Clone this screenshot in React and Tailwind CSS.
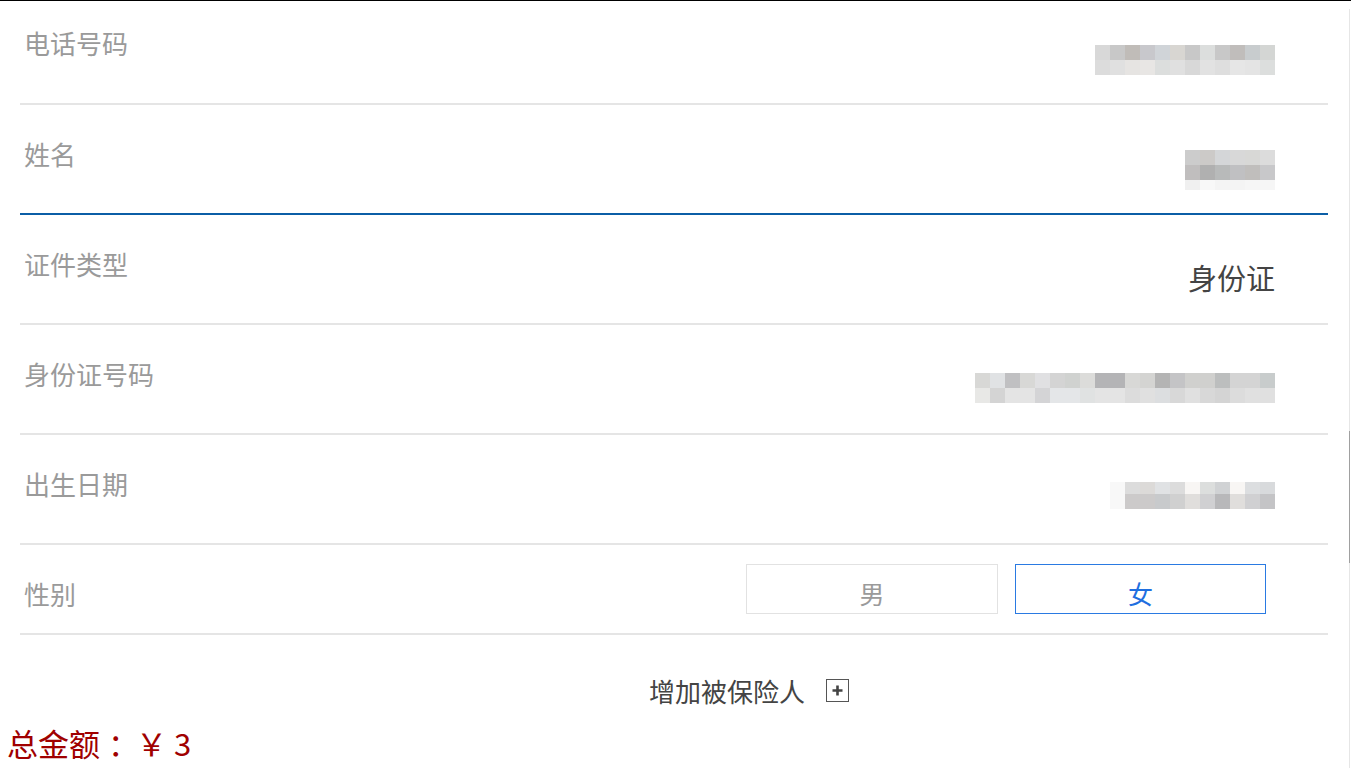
const phone = [
  ["#d8d8d8", "#c8c8c8", "#c0bcb8", "#c8c8cc", "#d0d4d8", "#d8d6d2", "#c8c8c8", "#dcdedd", "#c8c8c8", "#c0bdbb", "#c8ccce", "#d4d6d4"],
  ["#dcdcdc", "#e0e0e0", "#e6e4e2", "#e8e6e4", "#dcdedd", "#e0e0e0", "#d8d8d8", "#e2e2e2", "#dedede", "#e6e6e6", "#e4e4e4", "#dcdedd"],
]
const name = [
  ["#cccccc", "#cccac8", "#d4d6d8", "#d8d8d8", "#d8d8d6", "#dcdcdc"],
  ["#c0bebe", "#b0b0b0", "#b8baba", "#c0c0c2", "#c0bebc", "#c8c8ca"],
  ["#f0f0f0", "#f8f8f8", "#f4f4f4", "#f4f4f4", "#f6f6f6", "#f6f6f6"],
]
const idno = [
  ["#d8d8d6", "#e0e2e4", "#c0c0c2", "#d8d8d6", "#e0e0e2", "#d4d4d4", "#d0d2d0", "#dcdcda", "#b4b4b6", "#b4b4b6", "#d8d8d6", "#d4d4d2", "#b4b4b4", "#c4c4c6", "#d0d0ce", "#d0d0ce", "#bcbebe", "#d4d4d4", "#d4d4d4", "#c8cccc"],
  ["#e8e8e6", "#d4d4d4", "#e4e4e4", "#e4e4e4", "#d4d4d6", "#e4e6e8", "#e4e6e8", "#e0e2e2", "#e4e4e4", "#e4e4e4", "#dcdcdc", "#e0e0e0", "#dcdee0", "#d8d8d8", "#e0e0e0", "#d8d8d8", "#d4d4d4", "#dcdcdc", "#e0e0e0", "#e0e0e0"],
]
const birth = [
  ["#f8f8f8", "#dcdcdc", "#dcdad8", "#e0e2e4", "#dcdcdc", "#f8f6f4", "#dcdedd", "#d0d2d4", "#f8f6f4", "#dcdee0", "#d8dadc"],
  ["#f8f8f8", "#cccaca", "#cccaca", "#c8cacc", "#d0d0d0", "#e0dedc", "#d0d0d2", "#b8b8ba", "#e0dedc", "#d0d0d2", "#c4c4c6"],
]

// blurred values are drawn as mosaic blocks
const Mosaic = ({ rows, heights }) => {
  const h = heights.reduce((a, b) => a + b, 0)
  const w = rows[0].length * 15
  let y = 0
  return (
    <svg width={w} height={h} className="block">
      {rows.map((row, r) => {
        const top = y
        y += heights[r]
        return row.map((c, i) => (
          <rect key={`${r}-${i}`} x={i * 15} y={top} width="15" height={heights[r]} fill={c} />
        ))
      })}
    </svg>
  )
}

const Row = ({ label, children, first, blue, valueClass = "mt-[44px]" }) => (
  <div
    className={`flex justify-between border-b-2 ${blue ? "border-[#0b5ea6]" : "border-[#e5e5e5]"} ${first ? "h-[104px]" : "h-[110px]"}`}
  >
    <div className={`pl-[4px] text-[26px] leading-[26px] text-[#9a9a9a] ${first ? "pt-[29px]" : "pt-[36px]"}`}>
      {label}
    </div>
    <div className={`pr-[53px] ${valueClass}`}>{children}</div>
  </div>
)

export default function App() {
  return (
    <div
      className="flex h-[768px] w-full overflow-hidden border-t border-black bg-white"
      style={{ fontFamily: '"Noto Sans CJK SC", "Liberation Sans", sans-serif' }}
    >
      <div className="w-[1349px] shrink-0">
        <div className="pl-[20px] pr-[21px]">
          <Row label="电话号码" first valueClass="mt-[44px]">
            <Mosaic rows={phone} heights={[15, 15]} />
          </Row>
          <Row label="姓名" blue valueClass="mt-[45px]">
            <Mosaic rows={name} heights={[15, 15, 10]} />
          </Row>
          <Row label="证件类型" valueClass="mt-[47px]">
            <div className="text-[29px] leading-[30px] text-[#444]">身份证</div>
          </Row>
          <Row label="身份证号码" valueClass="mt-[48px]">
            <Mosaic rows={idno} heights={[15, 15]} />
          </Row>
          <Row label="出生日期" valueClass="mt-[47px]">
            <Mosaic rows={birth} heights={[12, 15]} />
          </Row>
          <div className="flex h-[90px] justify-between border-b-2 border-[#e5e5e5]">
            <div className="pl-[4px] pt-[36px] text-[26px] leading-[26px] text-[#9a9a9a]">性别</div>
            <div className="flex gap-[17px] pr-[62px] pt-[19px]">
              <button className="flex h-[50px] w-[252px] items-center justify-center border border-[#e2e2e2] pt-[8px] text-[25px] leading-[26px] text-[#9a9a9a]">
                男
              </button>
              <button className="flex h-[50px] w-[251px] items-center justify-center border border-[#2a7ae2] pt-[8px] text-[25px] leading-[26px] text-[#1f6fe0]">
                女
              </button>
            </div>
          </div>
        </div>
        <div className="flex h-[86px] items-center pl-[649px] pt-[25px]">
          <span className="text-[26px] leading-[26px] text-[#444]">增加被保险人</span>
          <span className="ml-[21px] flex h-[23px] w-[23px] items-center justify-center border border-[#555]">
            <svg width="13" height="13" viewBox="0 0 13 13">
              <path d="M6.5 1.5v10M1.5 6.5h10" stroke="#444" strokeWidth="2.6" />
            </svg>
          </span>
        </div>
        <div className="flex pl-[7px] pt-[6px] text-[31px] leading-[32px] text-[#a00000]">
          <span>总金额</span>
          <span className="ml-[8px]">：</span>
          <span className="-ml-[3px]">￥</span>
          <span className="ml-[7px]">3</span>
        </div>
      </div>
      <div className="flex w-px shrink-0 flex-col">
        <div className="h-[8px]" />
        <div className="h-[422px] bg-[#e6e6e6]" />
        <div className="h-[132px] bg-[#a0a0a0]" />
        <div className="flex-1 bg-[#e6e6e6]" />
      </div>
    </div>
  )
}
